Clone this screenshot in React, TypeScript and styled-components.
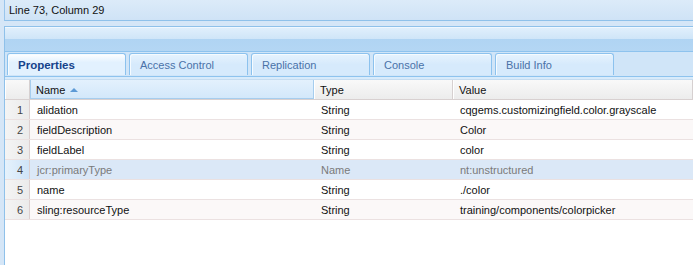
import React from "react";
import styled, { createGlobalStyle } from "styled-components";

const GlobalStyle = createGlobalStyle`
  html, body {
    margin: 0;
    padding: 0;
    background: #d5e6f7;
  }
  #root {
    width: 693px;
    height: 265px;
    overflow: hidden;
  }
`;

const Frame = styled.div`
  height: 265px;
  padding-left: 4px;
  display: flex;
  flex-direction: column;
  font-family: "Liberation Sans", Arial, sans-serif;
`;

const StatusBar = styled.div`
  height: 20px;
  flex: none;
  display: flex;
  align-items: center;
  padding-left: 4px;
  border-left: 1px solid #99c5ec;
  border-bottom: 1px solid #8fc1ea;
  background: linear-gradient(#dcebf9, #cfe3f6);
  font-size: 11px;
  color: #111;
`;

const Panel = styled.div`
  margin-top: 5px;
  flex: 1;
  display: flex;
  flex-direction: column;
  border-left: 1px solid #8fc1ea;
  border-top: 1px solid #8fc1ea;
  background: #fff;
`;

const PanelHeader = styled.div`
  height: 11px;
  flex: none;
  background: linear-gradient(#e0effc, #cfe5f8);
  border-top: 1px solid #f0f8ff;
`;

const TabStrip = styled.div`
  flex: none;
  background: linear-gradient(#b0d4f3, #bcdbf5);
  padding-top: 12px;
`;

const TabRow = styled.div`
  display: flex;
  gap: 3px;
  padding: 1px 0 0 2px;
  height: 23px;
  border-top: 1px solid #8ec3ee;
  border-bottom: 1px solid #8ec3ee;
  background: #d0e5f8;
`;

const Tab = styled.div<{ $active?: boolean }>`
  width: 119px;
  height: 22px;
  display: flex;
  align-items: center;
  padding-left: 10px;
  box-sizing: border-box;
  border: 1px solid #8cc2ee;
  border-bottom: none;
  border-radius: 3px 3px 0 0;
  background: ${(p) =>
    p.$active
      ? "linear-gradient(#ffffff, #e2f1fe 40%)"
      : "linear-gradient(#e6f3fe, #d6eafc 50%)"};
  box-shadow: inset 1px 1px 0 #f5fbff;
  font-size: ${(p) => (p.$active ? "11.5px" : "11px")};
  font-weight: ${(p) => (p.$active ? 700 : 400)};
  color: ${(p) => (p.$active ? "#15428b" : "#4a72a8")};
`;

const TabGap = styled.div`
  height: 2px;
  background: #d8ebfb;
  border-bottom: 1px solid #c6dcf0;
`;

const Grid = styled.div`
  flex: 1;
  background: #fff;
  font-size: 11px;
`;

const columns = "25px 284px 139px 1fr";

const HeaderRow = styled.div`
  display: grid;
  grid-template-columns: ${columns};
  height: 19px;
  background: linear-gradient(#f9f9f9, #ececec);
  border-bottom: 1px solid #d8d0d0;
`;

const HeaderCell = styled.div<{ $sorted?: boolean }>`
  display: flex;
  align-items: center;
  gap: 5px;
  padding-left: 5px;
  border-right: 1px solid #d6d0d0;
  border-left: 1px solid #fff;
  color: #111;
  ${(p) =>
    p.$sorted &&
    `
    background: linear-gradient(#e3f1fd, #d2e7fa);
    border-right: 1px solid #a6cdee;
    border-left: 1px solid #a6cdee;
    box-shadow: inset 0 -1px 0 #a6cdee;
  `}
`;

const SortArrow = styled.span`
  width: 0;
  height: 0;
  border-left: 4px solid transparent;
  border-right: 4px solid transparent;
  border-bottom: 4px solid #5d9ad6;
  margin-top: 1px;
`;

const Row = styled.div<{ $alt?: boolean; $selected?: boolean }>`
  display: grid;
  grid-template-columns: ${columns};
  height: 19px;
  border-bottom: 1px solid #ebe1e1;
  background: ${(p) => (p.$selected ? "#dbe8f7" : p.$alt ? "#fbf8f8" : "#fff")};
  color: ${(p) => (p.$selected ? "#7a7a7a" : "#111")};
`;

const NumCell = styled.div<{ $selected?: boolean }>`
  display: flex;
  align-items: center;
  justify-content: flex-end;
  padding-right: 6px;
  border-right: 1px solid #dccfcf;
  background: ${(p) =>
    p.$selected
      ? "linear-gradient(90deg, #e6f2fc, #cfe4f8)"
      : "linear-gradient(90deg, #f4f4f4, #ebebeb)"};
  color: #444;
`;

const Cell = styled.div`
  display: flex;
  align-items: center;
  padding-left: 7px;
  white-space: nowrap;
  overflow: hidden;
`;

type Prop = { name: string; type: string; value: string };

const props: Prop[] = [
  { name: "alidation", type: "String", value: "cqgems.customizingfield.color.grayscale" },
  { name: "fieldDescription", type: "String", value: "Color" },
  { name: "fieldLabel", type: "String", value: "color" },
  { name: "jcr:primaryType", type: "Name", value: "nt:unstructured" },
  { name: "name", type: "String", value: "./color" },
  { name: "sling:resourceType", type: "String", value: "training/components/colorpicker" },
];

const tabs = ["Properties", "Access Control", "Replication", "Console", "Build Info"];

export default function App() {
  return (
    <>
      <GlobalStyle />
      <Frame>
        <StatusBar>Line 73, Column 29</StatusBar>
        <Panel>
          <PanelHeader />
          <TabStrip>
            <TabRow>
              {tabs.map((t, i) => (
                <Tab key={t} $active={i === 0}>
                  {t}
                </Tab>
              ))}
            </TabRow>
          </TabStrip>
          <TabGap />
          <Grid>
            <HeaderRow>
              <HeaderCell />
              <HeaderCell $sorted>
                Name <SortArrow />
              </HeaderCell>
              <HeaderCell>Type</HeaderCell>
              <HeaderCell>Value</HeaderCell>
            </HeaderRow>
            {props.map((p, i) => (
              <Row key={p.name} $alt={i % 2 === 1} $selected={i === 3}>
                <NumCell $selected={i === 3}>{i + 1}</NumCell>
                <Cell>{p.name}</Cell>
                <Cell>{p.type}</Cell>
                <Cell>{p.value}</Cell>
              </Row>
            ))}
          </Grid>
        </Panel>
      </Frame>
    </>
  );
}
